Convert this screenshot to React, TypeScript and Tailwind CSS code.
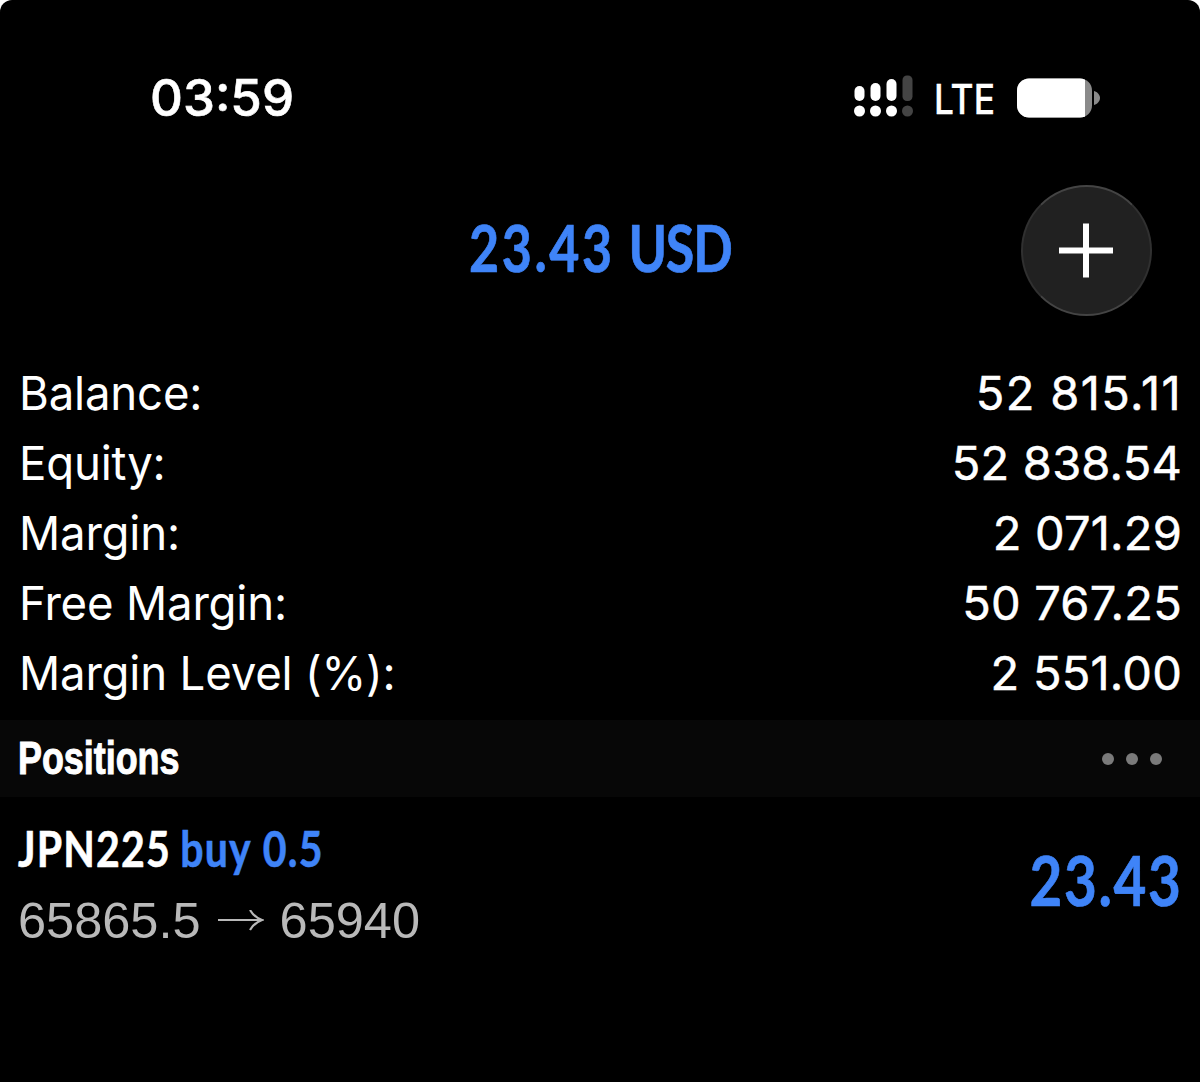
const summary = [
  { label: "Balance:", value: "52 815.11", valueClass: "tracking-[1.4px]" },
  { label: "Equity:", value: "52 838.54", valueClass: "tracking-[0.2px]" },
  { label: "Margin:", value: "2 071.29", valueClass: "tracking-[0.2px]" },
  { label: "Free Margin:", value: "50 767.25", valueClass: "tracking-[0.2px]" },
  { label: "Margin Level (%):", value: "2 551.00", valueClass: "tracking-[0.2px]" },
];

const App = () => {
  return (
    <div className="h-[1082px] w-[1200px] overflow-hidden bg-white font-['Inter',sans-serif] text-white">
      <div className="flex h-full flex-col rounded-t-[12px] bg-black">
        <StatusBar />
        <Header />
        <div className="pr-[18px] pl-[19px]">
          {summary.map((row) => (
            <div key={row.label} className="flex h-[70px] items-center justify-between pb-px whitespace-nowrap text-[47px]">
              <span className="origin-left scale-x-[0.97] tracking-[-0.2px]">{row.label}</span>
              <span className={`[-webkit-text-stroke:0.5px_white] ${row.valueClass}`}>{row.value}</span>
            </div>
          ))}
        </div>
        <div className="mt-[11px] flex h-[77px] items-center justify-between bg-[#070707] pr-[38.5px] pl-[18px]">
          <span className="origin-left scale-x-[0.78] font-['Liberation_Sans',sans-serif] text-[46px] font-bold [-webkit-text-stroke:1px_white]">
            Positions
          </span>
          <div className="flex gap-3">
            <span className="size-3 rounded-full bg-[#7a7a7a]" />
            <span className="size-3 rounded-full bg-[#7a7a7a]" />
            <span className="size-3 rounded-full bg-[#7a7a7a]" />
          </div>
        </div>
        <Position />
      </div>
    </div>
  );
};

const StatusBar = () => (
  <div className="flex h-[185px] items-start justify-between pt-[68px] pr-[100px] pl-[150px]">
    <span className="text-[51px] leading-[60px] font-medium [-webkit-text-stroke:0.6px_white]">03:59</span>
    <div className="flex h-[60px] items-center">
      <svg className="mb-1" width="60" height="44" viewBox="0 0 60 44" fill="#fff">
        <rect x="0.5" y="12" width="10" height="15" rx="5" />
        <rect x="16.5" y="9" width="10" height="18" rx="5" />
        <rect x="32.5" y="5" width="10" height="22" rx="5" />
        <rect x="48.5" y="1.5" width="10" height="25.5" rx="4.5" fill="#444" />
        <circle cx="5.5" cy="37" r="5.5" />
        <circle cx="21.5" cy="37" r="5.5" />
        <circle cx="37.5" cy="37" r="5.5" />
        <circle cx="53.5" cy="37" r="5.5" fill="#444" />
      </svg>
      <span className="mt-1 ml-5 w-[63px] text-[41px] font-medium">
        <span className="inline-block origin-left scale-x-[0.86] [-webkit-text-stroke:0.3px_white]">LTE</span>
      </span>
      <svg className="ml-5" width="83" height="40" viewBox="0 0 83 40">
        <clipPath id="battery">
          <rect x="0" y="0.5" width="75" height="39" rx="12" />
        </clipPath>
        <g clipPath="url(#battery)">
          <rect width="75" height="40" fill="#8a8a8a" />
          <rect width="68" height="40" fill="#fff" />
        </g>
        <path d="M77 13c3.5 1 6 3.8 6 7s-2.5 6-6 7z" fill="#8a8a8a" />
      </svg>
    </div>
  </div>
);

const Header = () => (
  <div className="mb-[43px] flex h-[131px] items-center justify-between pr-12 pl-[469px]">
    <span className="mb-[7px] origin-left scale-x-[0.8] font-['Lato',sans-serif] text-[65px] leading-none font-bold whitespace-nowrap text-[#3f84f8] [-webkit-text-stroke:0.7px_#3f84f8] [font-kerning:none]">
      <span className="tracking-[3.2px]">23.43</span>
      <span className="ml-[17px] tracking-[-1.5px]">USD</span>
    </span>
    <div className="flex size-[131px] shrink-0 items-center justify-center rounded-full border-2 border-[#303030] border-t-[#444] border-b-[#444] bg-[#212121]">
      <svg width="55" height="55" viewBox="0 0 55 55" stroke="#fff" strokeWidth="6">
        <path d="M27 0.5v54M0 27.5h54" />
      </svg>
    </div>
  </div>
);

const Position = () => (
  <div className="flex items-start justify-between pt-4 pr-[18px] pl-[18px]">
    <div className="whitespace-nowrap">
      <div className="h-[73px] origin-left scale-x-[0.82] font-['Lato',sans-serif] text-[50px] leading-[70px] font-bold tracking-[1.4px] [-webkit-text-stroke:0.6px] [font-kerning:none]">
        JPN225 <span className="-ml-0.5 text-[#3f84f8]">buy 0.5</span>
      </div>
      <div className="flex h-[70px] items-center font-['Liberation_Sans',sans-serif] text-[50.5px] text-[#b9b9b9]">
        <span>65865.5</span>
        <svg className="mr-4 ml-[17px]" width="46" height="22" viewBox="0 0 46 22" fill="none" stroke="#b9b9b9" strokeWidth="2.2">
          <path d="M0 10h44M32 0q4 7 12 10q-8 3-12 10" />
        </svg>
        <span>65940</span>
      </div>
    </div>
    <span className="mt-8 origin-right scale-x-[0.82] font-['Lato',sans-serif] text-[69px] leading-[70px] font-bold tracking-[2px] text-[#3f84f8] [-webkit-text-stroke:0.7px_#3f84f8] [font-kerning:none]">
      23.43
    </span>
  </div>
);

export default App;
